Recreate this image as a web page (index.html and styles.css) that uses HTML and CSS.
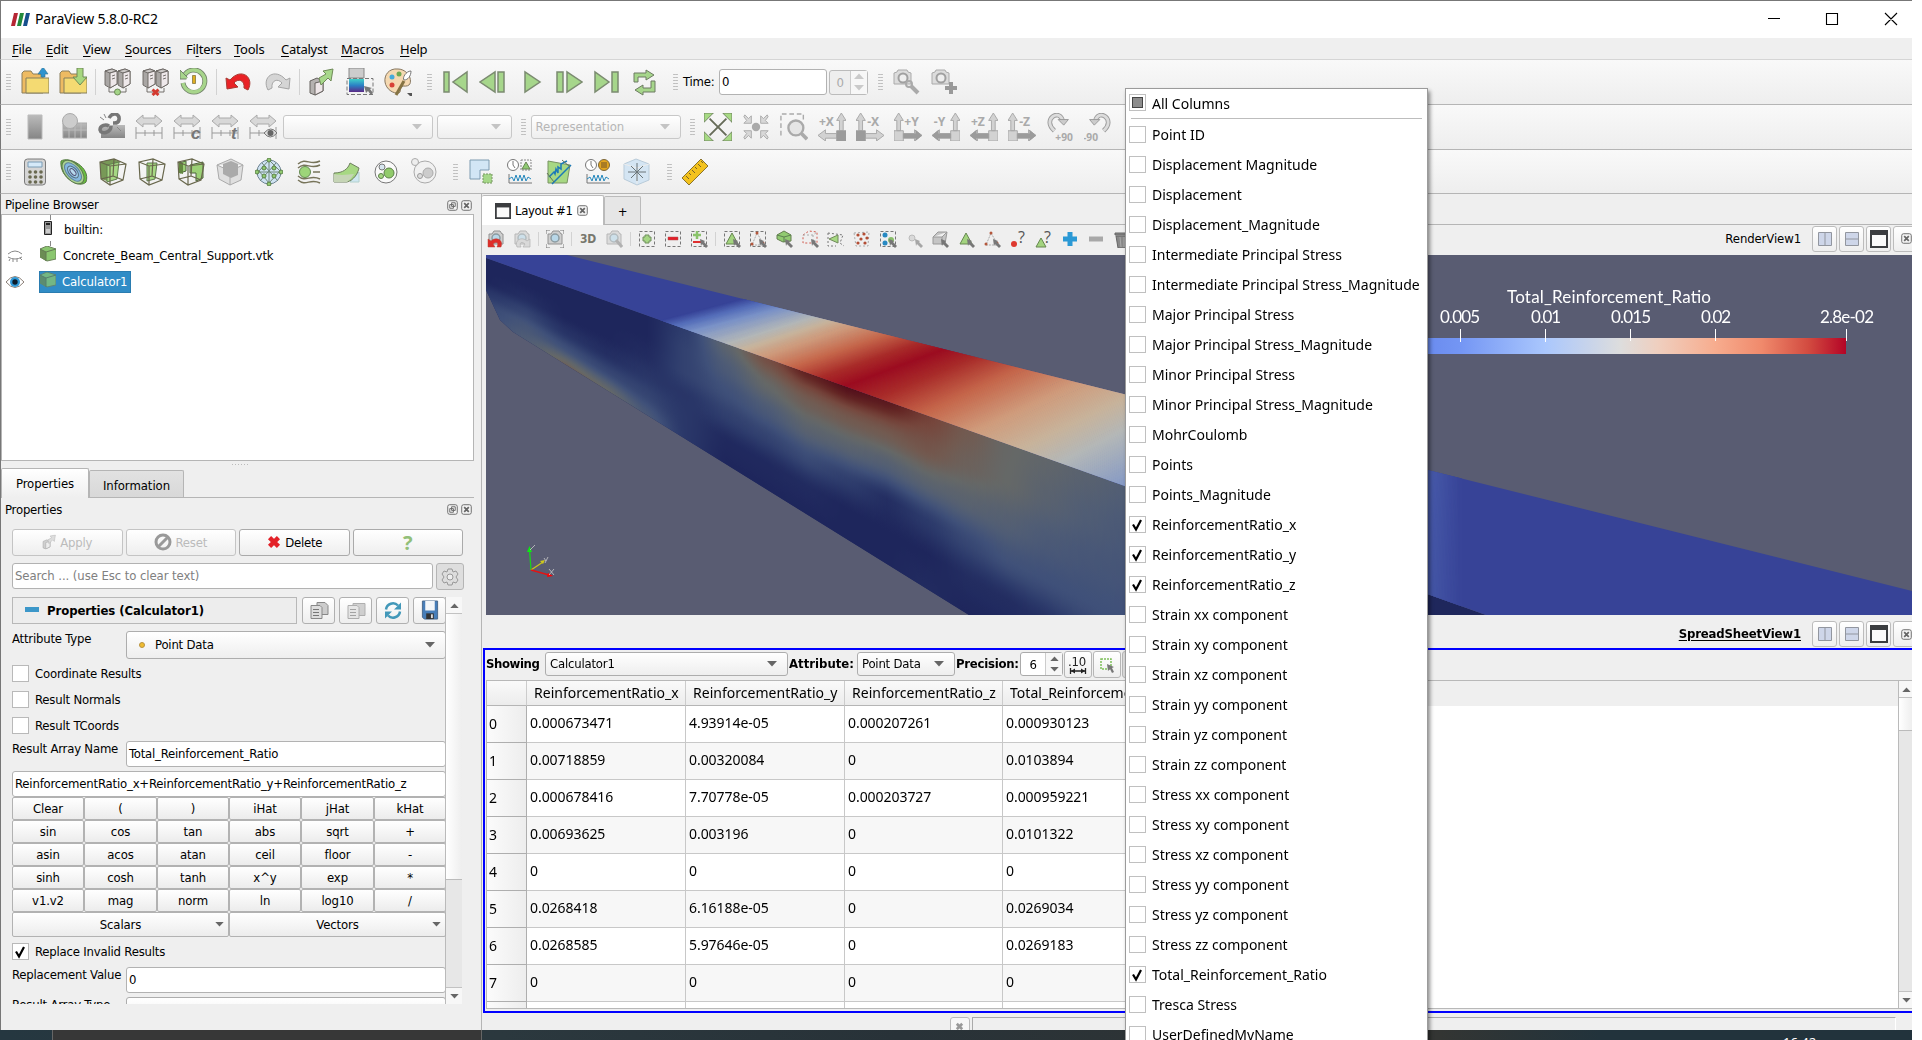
FILE: index.html
```html
<!DOCTYPE html>
<html lang="en">
<head>
<meta charset="utf-8">
<title>ParaView 5.8.0-RC2</title>
<link rel="stylesheet" href="styles.css">
</head>
<body>
<svg class="paints" aria-hidden="true">
  <defs>
    <linearGradient id="steel" x1="0" y1="0" x2="0" y2="1"><stop offset="0" stop-color="#bbb"/><stop offset="1" stop-color="#858585"/></linearGradient>
    <linearGradient id="cool" x1="0" y1="0" x2="0" y2="1"><stop offset="0" stop-color="#3fd0c9"/><stop offset=".5" stop-color="#2b7fc4"/><stop offset="1" stop-color="#5b2a86"/></linearGradient>
  </defs>
</svg>
<svg class="defs" aria-hidden="true">
  <symbol id="folder" viewBox="0 0 28 28"><path d="M1 25V5l2-2h7l2 3h10v19z" fill="#eebb62" stroke="#8a7f5c"/><path d="M5 10h23v15H5z" fill="#f4da72" stroke="#857f5c"/></symbol>
  <symbol id="open" viewBox="0 0 28 28"><use href="#folder"/><path d="M22-1l5 7h-3v3h-4V6h-3z" fill="#2e93cf" stroke="#34748f" stroke-width=".6"/></symbol>
  <symbol id="save" viewBox="0 0 28 28"><use href="#folder"/><path d="M18 0h6v9h4l-7 8-7-8h4z" fill="#a7d77f" stroke="#6f8a58"/></symbol>
  <symbol id="servers" viewBox="0 0 28 28"><g stroke="#66625f" stroke-width=".9"><path d="M1 3l7-2 5 2v13l-7 4-5-3z" fill="#a9a6a4"/><path d="M1 3l7-2 5 2-7 2z" fill="#cbc8c6"/><path d="M6 5l7-2v13l-7 4z" fill="#eee8ea"/><path d="M14 3l7-2 5 2v13l-7 4-5-3z" fill="#a9a6a4"/><path d="M14 3l7-2 5 2-7 2z" fill="#cbc8c6"/><path d="M19 5l7-2v13l-7 4z" fill="#eee8ea"/><path d="M8 8l3-1M8 11l3-1M21 8l3-1M21 11l3-1M5 20v4h17v-4" fill="none"/></g></symbol>
  <symbol id="connect" viewBox="0 0 28 28"><use href="#servers"/><circle cx="13.500" cy="24" r="3" fill="#a3d487" stroke="#6d8a58"/></symbol>
  <symbol id="disconnect" viewBox="0 0 28 28"><use href="#servers"/><path d="M10.500 21.500l6 5.500m0-5.500l-6 5.500" stroke="#d33a30" stroke-width="3"/></symbol>
  <symbol id="reset" viewBox="0 0 28 28"><path d="M4 8a11 11 0 1 1-1 7" fill="none" stroke="#72826a" stroke-width="5"/><path d="M4 8a11 11 0 1 1-1 7" fill="none" stroke="#a7d58b" stroke-width="3.400"/><path d="M0 2v9h9z" fill="#a7d58b" stroke="#72826a"/><circle cx="14" cy="14" r="8" fill="#fafafa"/><path d="M12.500 7.500h3v8h-3z" fill="#dfae20" stroke="#786a35" stroke-width=".7"/></symbol>
  <symbol id="undo" viewBox="0 0 28 28"><path d="M1 10l1 11 11-2-4-4c4-5 11-3 10 5l4 2C30 9 16-1 5 12z" fill="#e92226" stroke="#a83b33"/></symbol>
  <symbol id="redo" viewBox="0 0 28 28"><path d="M27 10l-1 11-11-2 4-4C15 10 8 12 9 20l-4 2C-2 9 12-1 23 12z" fill="#d5d5d5" stroke="#a5a5a5"/></symbol>
  <symbol id="box-out" viewBox="0 0 28 28"><path d="M2 13l7-3 6 3v10l-8 4-5-2z" fill="#b5b2b0" stroke="#66625f"/><path d="M7 15l8-2v10l-8 4z" fill="#eee6e8" stroke="#66625f"/><path d="M11 10L18 6l-3-3 10-2-2 12-3-3-7 7z" fill="#a7d78b" stroke="#6f8a58"/></symbol>
  <symbol id="colormap" viewBox="0 0 28 28"><path d="M3 0h15v10H3z" fill="#ccc" stroke="#888"/><path d="M3 11h15v13H3z" fill="url(#cool)"/><path d="M1 10.500h26v16H1z" fill="none" stroke="#777" stroke-dasharray="4 2"/><path d="M18 18l8 2-2 1 3 4-2 2-3-4-2 2z" fill="#777"/></symbol>
  <symbol id="palette" viewBox="0 0 28 28"><path d="M14 1C5 0 0 7 1 14s8 12 14 11c3-2-1-5 4-7 8 1 8-4 7-8S20 1 14 1z" fill="#f5d9b1" stroke="#85755e"/><circle cx="15" cy="6" r="2.500" fill="#70a952"/><circle cx="8" cy="9" r="2.500" fill="#46aada"/><circle cx="8" cy="17" r="2.500" fill="#d84135"/><path d="M27 3c-5 0-9 7-7 9 4 0 7-4 7-9z" fill="#fff" stroke="#777"/><path d="M20 13l-8 14" stroke="#857343" stroke-width="3"/><path d="M23 25h8l-4 4z" fill="#555"/></symbol>
  <symbol id="t-first" viewBox="0 0 28 28"><path d="M3 4h5v20H3zM26 4v20L12 14z" fill="#a6d68b" stroke="#7b8b70" stroke-width="1.500"/></symbol>
  <symbol id="t-prev" viewBox="0 0 28 28"><path d="M16 4v20L1 14zM19 4h6v20h-6z" fill="#a6d68b" stroke="#7b8b70" stroke-width="1.500"/></symbol>
  <symbol id="t-play" viewBox="0 0 28 28"><path d="M8 4v20l15-10z" fill="#a6d68b" stroke="#7b8b70" stroke-width="1.500"/></symbol>
  <symbol id="t-next" viewBox="0 0 28 28"><path d="M2 4h6v20H2zM12 4v20l15-10z" fill="#a6d68b" stroke="#7b8b70" stroke-width="1.500"/></symbol>
  <symbol id="t-last" viewBox="0 0 28 28"><path d="M2 4v20l14-10zM19 4h6v20h-6z" fill="#a6d68b" stroke="#7b8b70" stroke-width="1.500"/></symbol>
  <symbol id="t-loop" viewBox="0 0 28 28"><g fill="#a6d68b" stroke="#6d7b62"><path d="M3 14V5h12V2l8 5-8 5V9H7v5z"/><path d="M24 13v11H12v3l-8-5 8-5v3h8v-7z"/></g></symbol>
  <symbol id="cam" viewBox="0 0 28 28"><path d="M2 5l3-1 1-2h9l1 2 3 1v11H2z" fill="#dcdcdc" stroke="#aaa"/><circle cx="11" cy="10" r="4.500" fill="#eee" stroke="#a0a0a0" stroke-width="2"/></symbol>
  <symbol id="cam-wrench" viewBox="0 0 28 28"><use href="#cam"/><circle cx="17" cy="16" r="3" fill="none" stroke="#aaa" stroke-width="2"/><path d="M19 18l7 7" stroke="#aaa" stroke-width="4"/></symbol>
  <symbol id="cam-plus" viewBox="0 0 28 28"><use href="#cam"/><path d="M21 14v12M15 20h12" stroke="#999" stroke-width="4"/></symbol>

  <symbol id="bar" viewBox="0 0 28 28"><path d="M7 2h14v24H7z" fill="url(#steel)" stroke="#bbb"/></symbol>
  <symbol id="shape" viewBox="0 0 28 28"><path d="M4 10h24v15H4z" fill="url(#steel)" stroke="#aaa"/><path d="M10 10v15M16 10v15M22 10v15M4 17h24" stroke="#bbb" fill="none"/><circle cx="11" cy="8" r="7.500" fill="#ccc" stroke="#aaa"/></symbol>
  <symbol id="unlink" viewBox="0 0 28 28"><path d="M4 12h24v13H4z" fill="url(#steel)"/><g fill="none" stroke="#777" stroke-width="3.500"><path d="M12 5c4-7 11-4 10 2-1 4-5 3-6 3M14 13c0 7-10 9-11 4 0-5 6-6 9-4"/></g><path d="M3 4l4 3M7 1l2 4M20 14l4 4" stroke="#888"/></symbol>
  <symbol id="range" viewBox="0 0 28 28"><path d="M1 8l7-6v3h12V2l7 6-7 6v-3H8v3z" fill="#d8d8d8" stroke="#aaa"/><path d="M1 14v12M27 14v12M1 20h26M10 17v6M19 17v6" stroke="#999"/></symbol>
  <symbol id="range-c" viewBox="0 0 28 28"><use href="#range"/><text x="18" y="26" class="glyph">c</text></symbol>
  <symbol id="range-t" viewBox="0 0 28 28"><use href="#range"/><text x="20" y="26" class="glyph">t</text></symbol>
  <symbol id="range-eye" viewBox="0 0 28 28"><use href="#range"/><path d="M15 20q7-8 13 0-7 8-13 0z" fill="#ddd" stroke="#777"/><circle cx="21.500" cy="20" r="3" fill="#666"/></symbol>
  <symbol id="fit" viewBox="0 0 30 30"><path d="M6 6l18 18M24 6L6 24" stroke="#666b58" stroke-width="2"/><path d="M0 0h10L0 10zM30 0v10L20 0zM0 30V20l10 10zM30 30H20l10-10z" fill="#a7da84" stroke="#6c805d"/></symbol>
  <symbol id="converge" viewBox="0 0 30 30"><circle cx="15" cy="15" r="4.500" fill="#aaa"/><g fill="#d8d8d8" stroke="#aaa"><path d="M3 2l4 4 3-3v8H2l3-3-3-4zM27 2l-4 4-3-3v8h8l-3-3 3-4zM3 28l4-4 3 3v-8H2l3 3-3 4zM27 28l-4-4-3 3v-8h8l-3 3 3 4z"/></g></symbol>
  <symbol id="zoom-box" viewBox="0 0 30 30"><path d="M1 24V1h24v8" fill="none" stroke="#aaa" stroke-width="1.500" stroke-dasharray="5 3"/><circle cx="17" cy="16" r="8" fill="#e5e5e5" stroke="#aaa" stroke-width="2.500"/><path d="M23 22l6 6" stroke="#aaa" stroke-width="4"/></symbol>
  <symbol id="ax-left" viewBox="0 0 30 30"><g fill="#d2d2d2" stroke="#a8a8a8"><path d="M20 22H8v-4l-8 6 8 6v-3h12zM20 19h10v11H20zM23 19V8h-3l5-8 5 8h-3v11z"/></g></symbol>
  <symbol id="ax-right" viewBox="0 0 30 30"><g fill="#d2d2d2" stroke="#a8a8a8"><path d="M10 22h12v-4l8 6-8 6v-3H10zM0 19h10v11H0zM3 19V8H0l5-8 5 8H7v11z"/></g></symbol>
  <symbol id="px" viewBox="0 0 30 30"><use href="#ax-left"/><path d="M20 19h10v11H20z" fill="#9b9b9b"/><text x="1" y="14" class="ax">+X</text></symbol>
  <symbol id="mx" viewBox="0 0 30 30"><use href="#ax-right"/><path d="M0 19h10v11H0z" fill="#9b9b9b"/><text x="12" y="14" class="ax">-X</text></symbol>
  <symbol id="py" viewBox="0 0 30 30"><use href="#ax-right"/><path d="M10 22h13v-4l7 6-7 6v-3H10z" fill="#9b9b9b"/><text x="11" y="14" class="ax">+Y</text></symbol>
  <symbol id="my" viewBox="0 0 30 30"><use href="#ax-left"/><path d="M20 22H7v-4l-7 6 7 6v-3h13z" fill="#9b9b9b"/><text x="2" y="14" class="ax">-Y</text></symbol>
  <symbol id="pz" viewBox="0 0 30 30"><use href="#ax-left"/><path d="M20 22H7v-4l-7 6 7 6v-3h13z" fill="#9b9b9b"/><text x="1" y="14" class="ax">+Z</text></symbol>
  <symbol id="mz" viewBox="0 0 30 30"><use href="#ax-right"/><path d="M10 22h13v-4l7 6-7 6v-3H10z" fill="#9b9b9b"/><text x="12" y="14" class="ax">-Z</text></symbol>
  <symbol id="rot-p" viewBox="0 0 30 30"><path d="M9 19C-5 7 15-6 18 9" fill="none" stroke="#9c9c9c" stroke-width="5"/><path d="M9 19C-5 7 15-6 18 9" fill="none" stroke="#dcdcdc" stroke-width="3"/><path d="M13 7h11l-5 6z" fill="#ccc" stroke="#999"/><text x="10" y="30" class="ax sm">+90</text></symbol>
  <symbol id="rot-m" viewBox="0 0 30 30"><path d="M21 19C35 7 15-6 12 9" fill="none" stroke="#9c9c9c" stroke-width="5"/><path d="M21 19C35 7 15-6 12 9" fill="none" stroke="#dcdcdc" stroke-width="3"/><path d="M17 7H6l5 6z" fill="#ccc" stroke="#999"/><text x="-1" y="30" class="ax sm">-90</text></symbol>

  <symbol id="calc" viewBox="0 0 28 28"><rect x="3.500" y="1" width="21" height="26" rx="3" fill="#d5d5d5" stroke="#7b7b7b"/><path d="M7 4h14v5H7z" fill="#d5e9f8" stroke="#7b9cb5"/><g fill="#696951"><circle cx="9" cy="14" r="1.800"/><circle cx="14.500" cy="14" r="1.800"/><circle cx="20" cy="14" r="1.800"/><circle cx="9" cy="19" r="1.800"/><circle cx="14.500" cy="19" r="1.800"/><circle cx="20" cy="19" r="1.800"/><circle cx="9" cy="24" r="1.800"/><circle cx="14.500" cy="24" r="1.800"/><circle cx="20" cy="24" r="1.800"/></g></symbol>
  <symbol id="contour" viewBox="0 0 28 28"><path d="M1 3C9-2 31 9 26 24 20 31-1 20 1 3z" fill="#69be3f" stroke="#587846"/><ellipse cx="13" cy="14" rx="14" ry="8" transform="rotate(49 13 14)" fill="#abd291" stroke="#5d7a4e"/><ellipse cx="13" cy="14" rx="11" ry="6" transform="rotate(49 13 14)" fill="#85b9df" stroke="#60839b"/><ellipse cx="13" cy="14" rx="7" ry="4" transform="rotate(49 13 14)" fill="#9ac9e8" stroke="#546e80"/><ellipse cx="13" cy="14" rx="4" ry="2" transform="rotate(49 13 14)" fill="#b7d9ed" stroke="#557"/></symbol>
  <symbol id="cube" viewBox="0 0 28 28"><path d="M1 4L15 1l12 5-3 16-13 5-9-6zM1 4l10 4 16-2M11 8v19M15 1l-1 17-12 3M14 18l10 4" fill="none" stroke="#68674c" stroke-width="1.200"/></symbol>
  <symbol id="clip" viewBox="0 0 28 28"><path d="M1 4l13-3 8 3-11 4-3 15-6-2z" fill="#789957"/><path d="M8 7l12-3-2 17-10 3z" fill="#a6d883" stroke="#60814f"/><use href="#cube"/></symbol>
  <symbol id="slice" viewBox="0 0 28 28"><path d="M9 5h10l-2 16-8 2z" fill="#a6d883" stroke="#5f794f"/><use href="#cube"/></symbol>
  <symbol id="threshold" viewBox="0 0 28 28"><path d="M2 5l7-2v10l-6 2zM13 7l13-3v16l-7 3v-8h-6z" fill="#9bd075" stroke="#4d643c"/><path d="M2 5h4v11l-4-1z" fill="#648740"/><use href="#cube"/></symbol>
  <symbol id="extract" viewBox="0 0 28 28"><path d="M1 7L15 1l12 6-2 15-11 5L3 21zM1 7l13 6 13-6M14 13v14" fill="#dfdfdf" stroke="#aaa"/><path d="M7 6l8-3 7 3v11l-7 3-8-4z" fill="#aaa"/></symbol>
  <symbol id="glyph" viewBox="0 0 28 28"><circle cx="14" cy="14" r="12" fill="#cfe3f2" stroke="#6d8291"/><path d="M3 14h22M7 5l16 18M21 5L5 23M14 2L4 13l10 12 11-12zM14 2v24" fill="none" stroke="#6f887a"/><g fill="#91cb70" stroke="#5b8047"><circle cx="14" cy="2" r="2"/><circle cx="2" cy="14" r="2"/><circle cx="26" cy="14" r="2"/><circle cx="14" cy="26" r="2"/><circle cx="9" cy="10" r="2"/><circle cx="19" cy="10" r="2"/><circle cx="9" cy="18" r="2"/><circle cx="19" cy="18" r="2"/></g></symbol>
  <symbol id="stream" viewBox="0 0 28 28"><path d="M4 6C12-1 16 8 26 3M4 10C12 3 16 12 26 7M4 18c8 7 12-2 22 3M4 22c8 7 12-2 22 3M19 14h7" fill="none" stroke="#77745a" stroke-width="1.400"/><circle cx="11" cy="14" r="5.500" fill="#9dd579" stroke="#658b52"/></symbol>
  <symbol id="warp" viewBox="0 0 28 28"><path d="M17 24h9V14z" fill="#cfe7f1" stroke="#b2d0cc"/><path d="M1 24v-9c9 0 14-4 16-10l9 5c-1 5-5 12-12 14z" fill="#a7d883" stroke="#6f805f"/><path d="M1 24v-8c9 2 14 0 20 0-2 3-4 6-7 8z" fill="#c6d5b6"/></symbol>
  <symbol id="group" viewBox="0 0 28 28"><circle cx="14" cy="14" r="11" fill="#fafafa" stroke="#777"/><circle cx="10" cy="9" r="3" fill="#d7e6f0" stroke="#777"/><circle cx="17" cy="15" r="5" fill="#91cb6b" stroke="#5b8047"/><circle cx="9" cy="18" r="2.500" fill="#a6d883" stroke="#5b8047"/></symbol>
  <symbol id="level" viewBox="0 0 28 28"><circle cx="14" cy="14" r="11" fill="#f1f1f1" stroke="#aaa"/><circle cx="4" cy="4" r="3.500" fill="#eee" stroke="#aaa"/><circle cx="17" cy="15" r="5" fill="#ccc" stroke="#aaa"/><circle cx="9" cy="18" r="2.500" fill="#ddd" stroke="#999"/></symbol>
  <symbol id="sel-ext" viewBox="0 0 28 28"><path d="M3 2h19v10h-9v9H3z" fill="#d2e6f5" stroke="#7c9bb0"/><path d="M16 16h9v9h-9z" fill="#a5d788" stroke="#769463" stroke-dasharray="2 1"/></symbol>
  <symbol id="clock" viewBox="0 0 28 28"><circle cx="7" cy="7" r="5.500" fill="#fff" stroke="#777"/><path d="M7 3v4l2 3M3 16v9h23" fill="none" stroke="#777"/><path d="M3 21l3-2 2 4 2-6 2 6 2-6 2 6 2-6 2 6 2-4 3 2" fill="none" stroke="#2588bd"/></symbol>
  <symbol id="plot-sel" viewBox="0 0 28 28"><use href="#clock"/><path d="M15 2h10v10H15z" fill="none" stroke="#888" stroke-dasharray="2 1"/><path d="M20 4l4 7h-8z" fill="#8fcb72" stroke="#688553"/></symbol>
  <symbol id="plot-line" viewBox="0 0 28 28"><path d="M3 3l22 4-3 18H3z" fill="#a7d883" stroke="#789362"/><path d="M4 19l5-5 1 2 1-5 2 4 0-6 3 2 0-5 6-3M7 26L26 7" fill="none" stroke="#1c79b8" stroke-width="1.500"/><path d="M2 15l7 9M17 2l8 7" stroke="#627559"/></symbol>
  <symbol id="plot-time" viewBox="0 0 28 28"><use href="#clock"/><circle cx="20" cy="7" r="5.500" fill="#e3a620" stroke="#7d673a"/><path d="M17 4h6v6h-6z" fill="#a87b25"/></symbol>
  <symbol id="snow" viewBox="0 0 28 28"><path d="M1 6l12-5 13 5v16l-12 5-13-6z" fill="#d4e5f3" stroke="#b9cbd9"/><path d="M1 6l13 4 12-4M14 10v16" fill="none" stroke="#ececec"/><path d="M14 5v18M5 14h18M8 8l12 12M20 8L8 20" stroke="#6a7578"/></symbol>
  <symbol id="ruler" viewBox="0 0 28 28"><path d="M1 20L20 1l7 7L8 27z" fill="#f3c21d" stroke="#8b742e"/><path d="M5 18l3 3M8 15l2 2M11 12l3 3M14 9l2 2M17 6l3 3M20 3l2 2" stroke="#796326"/></symbol>

  <symbol id="s-cam" viewBox="0 0 18 18"><path d="M2 4h3l2-3h6l2 3h1v10H2z" fill="#cfcfcf" stroke="#929292"/><circle cx="9" cy="8" r="4" fill="#b8d7e8" stroke="#8c9ba1" stroke-width="1.500"/></symbol>
  <symbol id="s-camundo" viewBox="0 0 18 18"><use href="#s-cam"/><path d="M1 9v8h7l-2-3c4-3 6-1 4 3h4c3-7-5-11-10-6z" fill="#df2d29" stroke="#b04438" stroke-width=".5"/></symbol>
  <symbol id="s-camredo" viewBox="0 0 18 18"><g opacity=".6"><use href="#s-cam"/><path d="M17 9v8h-7l2-3c-4-3-6-1-4 3H4c-3-7 5-11 10-6z" fill="#ccc" stroke="#888" stroke-width=".7"/></g></symbol>
  <symbol id="s-shot" viewBox="0 0 18 18"><use href="#s-cam"/><path d="M0 4V0h4M14 0h4v4M18 14v4h-4M4 18H0v-4" fill="none" stroke="#777"/></symbol>
  <symbol id="s-camzoom" viewBox="0 0 18 18"><g opacity=".6"><use href="#s-cam"/><path d="M11 10l6 7" stroke="#888" stroke-width="3"/></g></symbol>
  <symbol id="s-dash" viewBox="0 0 18 18"><path d="M1.500 1.500h15v15h-15z" fill="none" stroke="#777" stroke-dasharray="3 2"/></symbol>
  <symbol id="s-cur" viewBox="0 0 18 18"><path d="M10 9l5 2-1 1 4 4-2 2-4-4-1 2z" fill="#777"/></symbol>
  <symbol id="s-plus" viewBox="0 0 18 18"><use href="#s-dash"/><path d="M7 5h4v2h2v4h-2v2H7v-2H5V7h2z" fill="#a5d684" stroke="#71905f"/></symbol>
  <symbol id="s-minus" viewBox="0 0 18 18"><use href="#s-dash"/><path d="M4 7h10v3H4z" fill="#e51e28" stroke="#a55" stroke-width=".5"/></symbol>
  <symbol id="s-pm" viewBox="0 0 18 18"><use href="#s-dash"/><path d="M7 1v8M3 5h8" stroke="#8ac36b" stroke-width="2.500"/><path d="M3 12h9" stroke="#df3030" stroke-width="2"/><use href="#s-cur"/></symbol>
  <symbol id="s-tri" viewBox="0 0 18 18"><path d="M9 3l6 11H3z" fill="#a3d47f" stroke="#668750"/><use href="#s-cur"/></symbol>
  <symbol id="s-seltri" viewBox="0 0 18 18"><use href="#s-dash"/><use href="#s-tri"/></symbol>
  <symbol id="s-pts" viewBox="0 0 18 18"><path d="M8 3l7 12H3z" fill="none" stroke="#aaa" stroke-dasharray="2 1"/><circle cx="8" cy="3" r="1.500" fill="#b4573c"/><circle cx="3" cy="14" r="1.500" fill="#b4573c"/><circle cx="14" cy="13" r="1.500" fill="#b4573c"/><use href="#s-cur"/></symbol>
  <symbol id="s-selpts" viewBox="0 0 18 18"><use href="#s-dash"/><use href="#s-pts"/></symbol>
  <symbol id="s-frus" viewBox="0 0 18 18"><path d="M2 5l7-4 7 4v6l-8 1-6-3z" fill="#91ca71" stroke="#657f50"/><path d="M2 5l7 2 7-2M9 7v5" fill="none" stroke="#5d8050"/><use href="#s-cur"/></symbol>
  <symbol id="s-frusp" viewBox="0 0 18 18"><path d="M2 5l6-4 8 1v11H2z" fill="none" stroke="#d15c50" stroke-dasharray="2 2"/><path d="M2 5h10l4-3M12 5v8" fill="none" stroke="#aaa" stroke-dasharray="2"/><use href="#s-cur"/></symbol>
  <symbol id="s-poly" viewBox="0 0 18 18"><path d="M1 3l15 2-3 8 4 3M1 3v13h8" fill="none" stroke="#777" stroke-dasharray="2 2"/><path d="M2 9l9-4v8z" fill="#a6d882" stroke="#718b5b"/></symbol>
  <symbol id="s-polyp" viewBox="0 0 18 18"><path d="M1 3l15-1-1 14H3z" fill="none" stroke="#aaa" stroke-dasharray="2 2"/><g fill="#b34e35"><circle cx="5" cy="5" r="1.600"/><circle cx="11" cy="4" r="1.600"/><circle cx="8" cy="9" r="1.600"/><circle cx="14" cy="8" r="1.600"/><circle cx="5" cy="13" r="1.600"/><circle cx="12" cy="13" r="1.600"/></g></symbol>
  <symbol id="s-block" viewBox="0 0 18 18"><use href="#s-dash"/><circle cx="6" cy="5" r="2.500" fill="#2789c2"/><circle cx="6" cy="13" r="2.500" fill="#2789c2"/><circle cx="12" cy="10" r="3" fill="#88be68"/><use href="#s-cur"/></symbol>
  <symbol id="s-gpt" viewBox="0 0 18 18"><g opacity=".6"><circle cx="7" cy="8" r="3" fill="#ccc" stroke="#999"/><use href="#s-cur"/></g></symbol>
  <symbol id="s-gcube" viewBox="0 0 18 18"><path d="M2 7l5-5h9l-2 12H2zM2 7h9l5-5M11 7v8" fill="#c5c5c5" stroke="#999"/><use href="#s-cur"/></symbol>
  <symbol id="s-hpt" viewBox="0 0 18 18"><circle cx="5" cy="14" r="3" fill="#de392f"/><text x="9" y="13" class="q">?</text></symbol>
  <symbol id="s-htri" viewBox="0 0 18 18"><path d="M6 8l5 9H1z" fill="#a3d47f" stroke="#668750"/><text x="9" y="13" class="q">?</text></symbol>
  <symbol id="s-add" viewBox="0 0 18 18"><path d="M9 2v14M2 9h14" stroke="#2b99d5" stroke-width="5"/></symbol>
  <symbol id="s-sub" viewBox="0 0 18 18"><path d="M2 6.500h14v5H2z" fill="#a8a8a8"/></symbol>
  <symbol id="s-trash" viewBox="0 0 18 18"><path d="M2 3h16v2H2zM3 6h14l-2 12H5z" fill="#888" stroke="#666"/><path d="M7 7l1 10M11 7v10" stroke="#aaa"/></symbol>
  <symbol id="x-box" viewBox="0 0 12 12"><rect x=".8" y=".8" width="10.400" height="10.400" rx="2" fill="#f4f4f4" stroke="#666"/><path d="M3.500 3.500l5 5m0-5l-5 5" stroke="#666" stroke-width="1.900"/></symbol>
  <symbol id="float" viewBox="0 0 12 12"><rect x=".8" y=".8" width="10.400" height="10.400" rx="2" fill="#f4f4f4" stroke="#666"/><path d="M5 3h4v4H5zM3 5h4v4H3z" fill="#f4f4f4" stroke="#666"/></symbol>
  <symbol id="check" viewBox="0 0 16 16"><path d="M4 7.500l3 5L12 3" fill="none" stroke="#000" stroke-width="2.200"/></symbol>
  <symbol id="win" viewBox="0 0 18 18"><path d="M1 1h16v16H1z" fill="#fafafa" stroke="#3b3d40" stroke-width="2"/><path d="M0 0h18v5H0z" fill="#3b3d40"/></symbol>
  <symbol id="split-v" viewBox="0 0 14 14"><path d="M.5.500h13v13H.500zM7 0v14" fill="#ced6e9" stroke="#92969f"/></symbol>
  <symbol id="split-h" viewBox="0 0 14 14"><path d="M.5.500h13v13H.500zM0 7h14" fill="#ced6e9" stroke="#92969f"/></symbol>
  <symbol id="dn" viewBox="0 0 10 6"><path d="M0 0h10L5 5.500z" fill="#666"/></symbol>
  <symbol id="up" viewBox="0 0 10 6"><path d="M0 6h10L5 .5z" fill="#666"/></symbol>
  <symbol id="s-cube" viewBox="0 0 16 16"><path d="M0 3l7-3 9 3v10l-9 2-7-4z" fill="#8ac66f" stroke="#6d835c"/><path d="M0 3l6 3v9l-6-4z" fill="#6b8c54"/><path d="M0 3l6 3 10-3M6 6v9" fill="none" stroke="#627a52"/></symbol>
</svg>

<div class="app">
  <header class="titlebar">
    <svg class="logo" viewBox="0 0 20 15"><path d="M4 1h4L5 14H1z" fill="#b62634"/><path d="M10 1h4l-3 13H7z" fill="#238a3c"/><path d="M16 1h4l-3 13h-4z" fill="#17508d"/></svg>
    <span class="app-name">ParaView 5.8.0-RC2</span>
    <svg class="win-ctl" viewBox="0 0 130 14"><path d="M0 6.500h12M58.500 1.500h11v11h-11zM117 1l12 12M129 1l-12 12" fill="none" stroke="#000" stroke-width="1.100"/></svg>
  </header>
  <nav class="menubar">
    <span><u>F</u>ile</span><span><u>E</u>dit</span><span><u>V</u>iew</span><span><u>S</u>ources</span><span>Fi<u>l</u>ters</span><span><u>T</u>ools</span><span><u>C</u>atalyst</span><span><u>M</u>acros</span><span><u>H</u>elp</span>
  </nav>

  <div class="toolbar row1">
    <i class="grip"></i>
    <svg><use href="#open"/></svg><svg><use href="#save"/></svg><i class="sep"></i>
    <svg><use href="#connect"/></svg><svg><use href="#disconnect"/></svg><svg><use href="#reset"/></svg><i class="sep"></i>
    <svg><use href="#undo"/></svg><svg><use href="#redo"/></svg><i class="sep"></i>
    <svg><use href="#box-out"/></svg><svg><use href="#colormap"/></svg><svg><use href="#palette"/></svg>
    <i class="grip g2"></i>
    <svg><use href="#t-first"/></svg><svg><use href="#t-prev"/></svg><svg><use href="#t-play"/></svg><svg><use href="#t-next"/></svg><svg><use href="#t-last"/></svg><svg><use href="#t-loop"/></svg>
    <i class="grip g3"></i>
    <span class="time-label">Time:</span><span class="field time">0</span>
    <span class="spin off"><b>0</b><span class="arrows"><svg><use href="#up"/></svg><svg><use href="#dn"/></svg></span></span>
    <i class="grip g4"></i>
    <svg><use href="#cam-wrench"/></svg><svg><use href="#cam-plus"/></svg>
  </div>
  <div class="toolbar row2">
    <i class="grip"></i>
    <svg><use href="#bar"/></svg><svg><use href="#shape"/></svg><svg><use href="#unlink"/></svg><svg><use href="#range"/></svg><svg><use href="#range-c"/></svg><svg><use href="#range-t"/></svg><svg><use href="#range-eye"/></svg>
    <span class="combo off c150"><svg><use href="#dn"/></svg></span>
    <span class="combo off c75"><svg><use href="#dn"/></svg></span>
    <i class="grip g5"></i>
    <span class="combo off c150 rep">Representation<svg><use href="#dn"/></svg></span>
    <i class="grip g5"></i>
    <svg><use href="#fit"/></svg><svg><use href="#converge"/></svg><svg><use href="#zoom-box"/></svg><svg><use href="#px"/></svg><svg><use href="#mx"/></svg><svg><use href="#py"/></svg><svg><use href="#my"/></svg><svg><use href="#pz"/></svg><svg><use href="#mz"/></svg><svg><use href="#rot-p"/></svg><svg><use href="#rot-m"/></svg>
  </div>
  <div class="toolbar row3">
    <i class="grip"></i>
    <svg><use href="#calc"/></svg><svg><use href="#contour"/></svg><svg><use href="#clip"/></svg><svg><use href="#slice"/></svg><svg><use href="#threshold"/></svg><svg><use href="#extract"/></svg><svg><use href="#glyph"/></svg><svg><use href="#stream"/></svg><svg><use href="#warp"/></svg><svg><use href="#group"/></svg><svg><use href="#level"/></svg>
    <i class="grip g6"></i>
    <svg><use href="#sel-ext"/></svg><svg><use href="#plot-sel"/></svg><svg><use href="#plot-line"/></svg><svg><use href="#plot-time"/></svg><svg><use href="#snow"/></svg>
    <i class="grip g7"></i>
    <svg><use href="#ruler"/></svg>
  </div>

  <main class="workspace">
    <aside class="side">
      <div class="dock-title"><span>Pipeline Browser</span><svg><use href="#float"/></svg><svg><use href="#x-box"/></svg></div>
      <div class="tree">
        <div class="node"><span class="eye"></span><svg class="srv" viewBox="0 0 8 14"><path d="M6.500-6v5M6.500 20v5" stroke="#888"/><path d="M.5.500h7v13h-7z" fill="#999" stroke="#222"/><path d="M2 2h4v2H2z" fill="#222"/><path d="M2 8h4v4H2z" fill="#ccc"/></svg><span class="name">builtin:</span></div>
        <div class="node"><span class="eye"><svg viewBox="0 0 18 12"><path d="M2 4q7-6 14 0M2 7q7 4 14 0M4 9l-1 2M7 9v3M11 9v3M14 8l2 2" fill="none" stroke="#888"/></svg></span><svg class="cube"><use href="#s-cube"/></svg><span class="name w">Concrete_Beam_Central_Support.vtk</span></div>
        <div class="node"><span class="eye"><svg viewBox="0 0 18 12"><path d="M0 6q9-11 18 0-9 11-18 0z" fill="#fff" stroke="#8b8078"/><circle cx="9" cy="6" r="5" fill="#3098d6"/><circle cx="9" cy="6" r="2.700" fill="#0b1c2b"/></svg></span><span class="picked"><svg class="cube"><use href="#s-cube"/></svg><span class="name">Calculator1</span></span></div>
      </div>
      <div class="splitter"></div>
      <div class="tabs"><span class="tab on">Properties</span><span class="tab">Information</span></div>
      <div class="dock-title second"><span>Properties</span><svg><use href="#float"/></svg><svg><use href="#x-box"/></svg></div>
      <div class="actions">
        <span class="btn off"><svg viewBox="0 0 28 28" class="gray"><use href="#box-out"/></svg>Apply</span>
        <span class="btn off"><svg viewBox="0 0 18 18"><circle cx="9" cy="9" r="7" fill="none" stroke="#999" stroke-width="3"/><path d="M4 14L14 4" stroke="#999" stroke-width="3"/></svg>Reset</span>
        <span class="btn"><svg viewBox="0 0 18 18" class="del"><path d="M4 4l10 10M14 4L4 14" stroke="#e32128" stroke-width="5"/></svg>Delete</span>
        <span class="btn help">?</span>
      </div>
      <div class="search"><span class="field">Search ... (use Esc to clear text)</span><span class="gear"><svg viewBox="0 0 18 18"><path d="M7 1h4l1 3 3-1 2 3-2 3 2 3-2 3-3-1-1 3H7l-1-3-3 1-2-3 2-3-2-3 2-3 3 1z" fill="#ddd" stroke="#999"/><circle cx="9" cy="9" r="3" fill="#eee" stroke="#999"/></svg></span></div>
      <div class="scroll-area">
        <div class="form">
          <div class="section"><span class="section-title"><i></i>Properties (Calculator1)</span>
            <span class="tool"><svg viewBox="0 0 18 18"><path d="M7 1h8l3 3v9H7z" fill="#ccc" stroke="#888"/><path d="M1 4h9l2 2v11H1z" fill="#ddd" stroke="#888"/><path d="M3 8h6M3 11h6M3 14h6" stroke="#777"/></svg></span>
            <span class="tool fade"><svg viewBox="0 0 18 18"><path d="M6 2h12v12H6z" fill="#bbb" stroke="#888"/><path d="M1 4h9l2 2v11H1z" fill="#ddd" stroke="#888"/><path d="M3 8h6M3 11h6M3 14h6" stroke="#777"/></svg></span>
            <span class="tool"><svg viewBox="0 0 18 18"><path d="M2 8a7 7 0 0 1 12-4M16 10a7 7 0 0 1-12 4" fill="none" stroke="#4298b9" stroke-width="2.500"/><path d="M17 1v7h-7zM1 17v-7h7z" fill="#4298b9"/></svg></span>
            <span class="tool"><svg viewBox="0 0 18 20"><path d="M1 0h16v19H3l-2-2z" fill="#477eb9" stroke="#48678b"/><path d="M4 0h10v10H4z" fill="#f4f7fa"/><path d="M5 13h8v6H5z" fill="#333"/><path d="M10 14h2v4h-2z" fill="#ddd"/></svg></span>
          </div>
          <div class="prop combo-row"><label>Attribute Type</label><span class="combo big"><i class="dot"></i>Point Data<svg><use href="#dn"/></svg></span></div>
          <div class="chk"><span class="box"></span>Coordinate Results</div>
          <div class="chk"><span class="box"></span>Result Normals</div>
          <div class="chk"><span class="box"></span>Result TCoords</div>
          <div class="prop name-row"><label>Result Array Name</label><span class="field">Total_Reinforcement_Ratio</span></div>
          <div class="field expr">ReinforcementRatio_x+ReinforcementRatio_y+ReinforcementRatio_z</div>
          <div class="keys">
            <span>Clear</span><span>(</span><span>)</span><span>iHat</span><span>jHat</span><span>kHat</span>
            <span>sin</span><span>cos</span><span>tan</span><span>abs</span><span>sqrt</span><span>+</span>
            <span>asin</span><span>acos</span><span>atan</span><span>ceil</span><span>floor</span><span>-</span>
            <span>sinh</span><span>cosh</span><span>tanh</span><span>x^y</span><span>exp</span><span>*</span>
            <span>v1.v2</span><span>mag</span><span>norm</span><span>ln</span><span>log10</span><span>/</span>
            <span class="wide">Scalars<svg><use href="#dn"/></svg></span><span class="wide">Vectors<svg><use href="#dn"/></svg></span>
          </div>
          <div class="chk last"><span class="box"><svg><use href="#check"/></svg></span>Replace Invalid Results</div>
          <div class="prop value-row"><label>Replacement Value</label><span class="field">0</span></div>
          <div class="prop type-row"><label>Result Array Type</label><span class="combo big"></span></div>
        </div>
        <div class="vbar"><span class="cap"><svg><use href="#up"/></svg></span><span class="thumb"></span><span class="groove"></span><span class="cap"><svg><use href="#dn"/></svg></span></div>
      </div>
    </aside>

    <section class="views">
      <div class="view-tabs"><span class="vtab on"><svg class="w18"><use href="#win"/></svg>Layout #1<svg class="w12"><use href="#x-box"/></svg></span><span class="vtab add">+</span></div>
      <div class="view-bar">
        <svg><use href="#s-camundo"/></svg><svg><use href="#s-camredo"/></svg><i class="sep"></i><svg><use href="#s-shot"/></svg><i class="sep"></i><span class="d3">3D</span><svg><use href="#s-camzoom"/></svg><i class="sep"></i>
        <svg><use href="#s-plus"/></svg><svg><use href="#s-minus"/></svg><svg><use href="#s-pm"/></svg><i class="sep"></i>
        <svg><use href="#s-seltri"/></svg><svg><use href="#s-selpts"/></svg><svg><use href="#s-frus"/></svg><svg><use href="#s-frusp"/></svg><svg><use href="#s-poly"/></svg><svg><use href="#s-polyp"/></svg><svg><use href="#s-block"/></svg><svg><use href="#s-gpt"/></svg><svg><use href="#s-gcube"/></svg><svg><use href="#s-tri"/></svg><svg><use href="#s-pts"/></svg><svg><use href="#s-hpt"/></svg><svg><use href="#s-htri"/></svg><svg><use href="#s-add"/></svg><svg><use href="#s-sub"/></svg><svg><use href="#s-trash"/></svg>
        <span class="view-name">RenderView1</span>
        <span class="view-btns"><span><svg><use href="#split-v"/></svg></span><span><svg><use href="#split-h"/></svg></span><span><svg class="w18"><use href="#win"/></svg></span><span><svg class="w12"><use href="#x-box"/></svg></span></span>
      </div>

      <div class="render">
        <canvas id="beam" width="1426" height="360"></canvas>
        <svg class="scene" viewBox="0 0 1426 360">
          <defs>
            <linearGradient id="legendGrad"><stop offset="0" stop-color="#5a7be6"/><stop offset=".18" stop-color="#7496f4"/><stop offset=".36" stop-color="#aac7fd"/><stop offset=".52" stop-color="#dddddd"/><stop offset=".6" stop-color="#efcfbf"/><stop offset=".72" stop-color="#f7ad8f"/><stop offset=".82" stop-color="#f08a6c"/><stop offset=".92" stop-color="#d24b40"/><stop offset="1" stop-color="#b40426"/></linearGradient>
          </defs>
          <g fill="none" stroke-width="1.300"><path d="M45 315L43.500 294" stroke="#19d21c"/><path d="M45 315l12-8" stroke="#c9c419"/><path d="M45 315l18 5" stroke="#e21414"/></g>
          <path d="M43.500 291l2.500 6h-5z" fill="#0ee814"/><path d="M59 305l-2 4-3-3z" fill="#cfc91d"/><path d="M67 321l-6 1 1-4z" fill="#f00"/>
          <path d="M63 314l5 6M68 314l-5 6M58 303l2 3M62 302l-3 6M44 295l5-5" fill="none" stroke="#ccc" stroke-width=".8"/>
          <rect x="890" y="83" width="470" height="16" fill="url(#legendGrad)"/>
          <path d="M974.500 74v13M1059.500 74v13M1144.500 74v12M1229.500 74v12M1360.500 74v12" stroke="#fff"/>
          <g class="legend"><text x="1123" y="48" textLength="204">Total_Reinforcement_Ratio</text><text x="974" y="68" textLength="40">0.005</text><text x="1060" y="68" textLength="30">0.01</text><text x="1145" y="68" textLength="40">0.015</text><text x="1230" y="68" textLength="30">0.02</text><text x="1361" y="68" textLength="54">2.8e-02</text></g>
        </svg>
      </div>

      <div class="sheet-title"><span class="view-name active">SpreadSheetView1</span><span class="view-btns"><span><svg><use href="#split-v"/></svg></span><span><svg><use href="#split-h"/></svg></span><span><svg class="w18"><use href="#win"/></svg></span><span><svg class="w12"><use href="#x-box"/></svg></span></span></div>
      <div class="sheet">
        <div class="sheet-bar"><b class="showing">Showing</b><span class="combo s1">Calculator1<svg><use href="#dn"/></svg></span><b class="attr">Attribute:</b><span class="combo s2">Point Data<svg><use href="#dn"/></svg></span><b class="prec">Precision:</b>
          <span class="spin prec-spin"><b>6</b><span class="arrows"><svg><use href="#up"/></svg><svg><use href="#dn"/></svg></span></span>
          <span class="sbtn"><svg viewBox="0 0 20 22"><text x="0" y="12" class="ten">.10</text><path d="M2 17h16M2.500 14v6M17.500 14v6" stroke="#222" stroke-width="1.300"/><path d="M3 17l4-2.500v5zM17 17l-4-2.500v5z" fill="#222"/></svg></span>
          <span class="sbtn"><svg viewBox="0 0 20 22"><path d="M4 5h10v10H4z" fill="none" stroke="#7ec05a" stroke-dasharray="2 1" stroke-width="1.500"/><path d="M10 10l7 3-2 1 2 4-2 1-2-4-2 2z" fill="#777"/></svg></span><span class="sbtn dark"></span>
        </div>
        <div class="table-wrap">
          <div class="grid">
            <span class="h n"></span><span class="h">ReinforcementRatio_x</span><span class="h">ReinforcementRatio_y</span><span class="h">ReinforcementRatio_z</span><span class="h">Total_Reinforcement_Ratio</span><span class="hfill"></span>
            <span class="n">0</span><span>0.000673471</span><span>4.93914e-05</span><span>0.000207261</span><span>0.000930123</span><em></em>
            <span class="n">1</span><span class="alt">0.00718859</span><span class="alt">0.00320084</span><span class="alt">0</span><span class="alt">0.0103894</span><em></em>
            <span class="n">2</span><span>0.000678416</span><span>7.70778e-05</span><span>0.000203727</span><span>0.000959221</span><em></em>
            <span class="n">3</span><span class="alt">0.00693625</span><span class="alt">0.003196</span><span class="alt">0</span><span class="alt">0.0101322</span><em></em>
            <span class="n">4</span><span>0</span><span>0</span><span>0</span><span>0</span><em></em>
            <span class="n">5</span><span class="alt">0.0268418</span><span class="alt">6.16188e-05</span><span class="alt">0</span><span class="alt">0.0269034</span><em></em>
            <span class="n">6</span><span>0.0268585</span><span>5.97646e-05</span><span>0</span><span>0.0269183</span><em></em>
            <span class="n">7</span><span class="alt">0</span><span class="alt">0</span><span class="alt">0</span><span class="alt">0</span><em></em>
            <span class="n"></span><span></span><span></span><span></span><span></span><em></em>
          </div>
          <div class="vbar"><span class="cap"><svg><use href="#up"/></svg></span><span class="thumb"></span><span class="groove"></span><span class="cap"><svg><use href="#dn"/></svg></span></div>
        </div>
      </div>
      <div class="status"><span class="cancel"><svg viewBox="0 0 10 10"><path d="M2 2l6 6M8 2L2 8" stroke="#999" stroke-width="3"/></svg></span><span class="progress"></span></div>
    </section>
  </main>
  <footer class="taskbar"><span class="task"></span><span class="clock">16:42</span></footer>

  <div class="popup">
    <div class="item all"><span class="box"><i></i></span>All Columns</div>
    <div class="line"></div>
    <div class="item"><span class="box"></span>Point ID</div>
    <div class="item"><span class="box"></span>Displacement Magnitude</div>
    <div class="item"><span class="box"></span>Displacement</div>
    <div class="item"><span class="box"></span>Displacement_Magnitude</div>
    <div class="item"><span class="box"></span>Intermediate Principal Stress</div>
    <div class="item"><span class="box"></span>Intermediate Principal Stress_Magnitude</div>
    <div class="item"><span class="box"></span>Major Principal Stress</div>
    <div class="item"><span class="box"></span>Major Principal Stress_Magnitude</div>
    <div class="item"><span class="box"></span>Minor Principal Stress</div>
    <div class="item"><span class="box"></span>Minor Principal Stress_Magnitude</div>
    <div class="item"><span class="box"></span>MohrCoulomb</div>
    <div class="item"><span class="box"></span>Points</div>
    <div class="item"><span class="box"></span>Points_Magnitude</div>
    <div class="item"><span class="box"><svg><use href="#check"/></svg></span>ReinforcementRatio_x</div>
    <div class="item"><span class="box"><svg><use href="#check"/></svg></span>ReinforcementRatio_y</div>
    <div class="item"><span class="box"><svg><use href="#check"/></svg></span>ReinforcementRatio_z</div>
    <div class="item"><span class="box"></span>Strain xx component</div>
    <div class="item"><span class="box"></span>Strain xy component</div>
    <div class="item"><span class="box"></span>Strain xz component</div>
    <div class="item"><span class="box"></span>Strain yy component</div>
    <div class="item"><span class="box"></span>Strain yz component</div>
    <div class="item"><span class="box"></span>Strain zz component</div>
    <div class="item"><span class="box"></span>Stress xx component</div>
    <div class="item"><span class="box"></span>Stress xy component</div>
    <div class="item"><span class="box"></span>Stress xz component</div>
    <div class="item"><span class="box"></span>Stress yy component</div>
    <div class="item"><span class="box"></span>Stress yz component</div>
    <div class="item"><span class="box"></span>Stress zz component</div>
    <div class="item"><span class="box"><svg><use href="#check"/></svg></span>Total_Reinforcement_Ratio</div>
    <div class="item"><span class="box"></span>Tresca Stress</div>
    <div class="item"><span class="box"></span>UserDefinedMyName</div>
  </div>
</div>
<script src="beam.js"></script>
</body>
</html>
```
FILE: beam.js
```js
// Draws the beam: a lit top face and a shaded front face, both coloured by the scalar field.
(function () {
  var canvas = document.getElementById('beam');
  var ctx = canvas.getContext('2d');

  var topMap = [[0, 55, 67, 151], [0.12, 86, 111, 186], [0.25, 123, 147, 200], [0.45, 180, 184, 184], [0.55, 200, 180, 156],
    [0.66, 208, 156, 124], [0.8, 198, 103, 75], [0.92, 170, 45, 42], [1, 157, 13, 33]];
  var frontMap = [[0, 30, 38, 92], [0.12, 44, 58, 107], [0.25, 63, 80, 121], [0.36, 80, 93, 117], [0.5, 101, 104, 103],
    [0.62, 114, 90, 80], [0.75, 118, 70, 60], [0.87, 100, 38, 36], [1, 82, 14, 26]];

  function colour(map, s) {
    s = Math.max(0, Math.min(1, s));
    var i = 1;
    while (i < map.length - 1 && map[i][0] < s) i++;
    var a = map[i - 1], b = map[i], t = (s - a[0]) / (b[0] - a[0]);
    return 'rgb(' + [1, 2, 3].map(function (k) { return Math.round(a[k] + (b[k] - a[k]) * t); }).join(',') + ')';
  }
  function polygon(pts) {
    ctx.beginPath();
    pts.forEach(function (p, i) { i ? ctx.lineTo(p[0], p[1]) : ctx.moveTo(p[0], p[1]); });
    ctx.closePath();
  }
  function ridge(x) { return 3 + 0.357 * x; }
  function crest(x) { return (x - 81) * 0.2498; }
  function sole(x) { return 77 + (x - 27) * 0.6206; }

  ctx.fillStyle = '#595c72';
  ctx.fillRect(0, 0, 1426, 360);

  // Front face: one row of scalars (ridge to sole) for every 40 px.
  var rows = [
    [0, 0, 0, 0.1, 0.2, 0.22], [0, 0, 0.05, 0.18, 0.3, 0.36], [0, 0, 0, 0.08, 0.25, 0.56], [0, 0, 0, 0.05, 0.2, 0.5],
    [0, 0, 0.03, 0.09, 0.18, 0.32], [0.14, 0.17, 0.17, 0.09, 0.1, 0.1], [0.45, 0.34, 0.25, 0.15, 0.02, 0],
    [0.7, 0.5, 0.33, 0.17, 0.02, 0], [0.9, 0.6, 0.43, 0.22, 0.03, 0], [1, 0.63, 0.42, 0.15, 0, 0],
    [0.95, 0.62, 0.38, 0.05, 0, 0], [0.78, 0.65, 0.42, 0.12, 0, 0.03], [0.62, 0.56, 0.42, 0.2, 0.04, 0],
    [0.51, 0.5, 0.39, 0.26, 0.04, 0], [0.47, 0.42, 0.33, 0.25, 0.06, 0], [0.42, 0.36, 0.3, 0.25, 0.12, 0],
    [0.37, 0.32, 0.29, 0.25, 0.18, 0.1], [0.3, 0.3, 0.3, 0.25, 0.2, 0.1]
  ];
  ctx.save();
  polygon([[0, 3], [1000, 360], [483, 360], [27, 77], [14, 65], [0, 35]]);
  ctx.clip();
  ctx.fillStyle = '#1f275c';
  ctx.fillRect(0, 0, 1010, 360);
  function smooth(t) { return t * t * (3 - 2 * t) * 0.5 + t * 0.5; }
  for (var x = 0; x < 672; x++) {
    var c = Math.floor(x / 40), f = smooth(x / 40 - c);
    var y0 = ridge(x), y1 = sole(x);
    var g = ctx.createLinearGradient(0, y0, 0, y1);
    for (var k = 0; k <= 30; k++) {
      var v = k / 30 * 5, r = Math.min(4, Math.floor(v)), q = smooth(v - r);
      var left = rows[c][r] + (rows[c][r + 1] - rows[c][r]) * q;
      var right = rows[c + 1][r] + (rows[c + 1][r + 1] - rows[c + 1][r]) * q;
      g.addColorStop(k / 30, colour(frontMap, left + (right - left) * f));
    }
    ctx.fillStyle = g;
    ctx.fillRect(x, y0 - 2, 1, y1 - y0 + 6);
  }
  ctx.restore();

  // Top face: iso-lines as [value, x on the ridge, x on the crest].
  var iso = [[0, 174, 256], [0.25, 205, 294], [0.45, 240, 328], [0.64, 272, 360], [0.8, 306, 400], [0.92, 334, 432], [1, 359, 458],
    [0.92, 392, 490], [0.8, 436, 534], [0.66, 486, 592], [0.55, 535, 645], [0.42, 585, 700], [0.28, 640, 770], [0.12, 900, 915], [0, 975, 975]];
  ctx.save();
  polygon([[0, 0], [81, 0], [1426, 336], [1426, 360], [1000, 360], [0, 3]]);
  ctx.clip();
  ctx.fillStyle = colour(topMap, 0);
  ctx.fillRect(0, 0, 1426, 360);
  function at(lo, hi, e) {
    var ax = lo, ay = ridge(lo), bx = hi, by = crest(hi);
    return [ax + (bx - ax) * e, ay + (by - ay) * e];
  }
  for (var i = 1; i < iso.length; i++) {
    var a = iso[i - 1], b = iso[i], n = 48;
    for (var j = 0; j < n; j++) {
      var t0 = j / n, t1 = (j + 1) / n;
      var l0 = a[1] + (b[1] - a[1]) * t0, h0 = a[2] + (b[2] - a[2]) * t0;
      var l1 = a[1] + (b[1] - a[1]) * t1 + 1, h1 = a[2] + (b[2] - a[2]) * t1 + 1;
      ctx.fillStyle = colour(topMap, a[0] + (b[0] - a[0]) * t0);
      polygon([at(l0, h0, -0.05), at(l0, h0, 1.05), at(l1, h1, 1.05), at(l1, h1, -0.05)]);
      ctx.fill();
    }
  }
  ctx.restore();
})();
```
FILE: styles.css
```css
* { box-sizing: border-box; }
html, body { margin: 0; background: #fff; overflow: hidden; }
body { font: 13px/16px "DejaVu Sans Condensed", "DejaVu Sans", sans-serif; letter-spacing: -0.2px; color: #000; }
svg { overflow: visible; display: block; flex: none; }
.paints { width: 0; height: 0; position: absolute; }
.defs { display: none; }
i, em { font-style: normal; }

.app { position: relative; width: 1912px; height: 1040px; overflow: hidden; background: #efefef; display: flex; flex-direction: column; white-space: nowrap; }
.titlebar, .menubar, .popup, .grid { font-family: "Noto Sans", "Open Sans", sans-serif; letter-spacing: 0; }
.titlebar { flex: none; height: 38px; border-top: 1px solid #777; border-left: 1px solid #777; background: #fff; display: flex; align-items: center; padding-left: 9px; padding-bottom: 1px; font-size: 14px; letter-spacing: -0.15px; }
.logo { width: 20px; height: 15px; margin-right: 5px; }
.win-ctl { width: 130px; height: 14px; margin-left: auto; margin-right: 14px; }
.menubar { flex: none; height: 22px; border-left: 1px solid #777; border-bottom: 1px solid #d5d5d5; display: grid; grid-template-columns: 34px 37px 42px 61px 48px 47px 60px 59px 40px; padding-left: 11px; align-items: center; font-size: 13px; letter-spacing: -0.25px; line-height: 20px; }
.menubar u { text-underline-offset: 2px; }

.toolbar { flex: none; height: 45px; display: flex; align-items: center; background: linear-gradient(#f9f9f9, #eee); border-bottom: 1px solid #b5b5b5; border-left: 1px solid #777; }
.toolbar > svg { width: 28px; height: 28px; margin: 0 5px; }
.row3 { height: 44px; }
.row3 > svg { margin: 0 5.5px; }
.grip { flex: none; width: 5px; height: 18px; margin: 0 5px 0 5px; background: radial-gradient(circle, #bbb 0.8px, transparent 1px) 0 0 / 2.500px 3px; }
.row3 > .grip:first-child { margin-right: 4px; }
.sep { flex: none; width: 1px; height: 26px; background: #d2d2d2; margin: 0 3px; }
.toolbar .g2 { margin: 0 4px 0 10px; }
.toolbar .g3 { margin: 0 4px 0 9px; }
.time-label { width: 37px; padding-left: 1px; }
.field { display: block; background: #fff; border: 1px solid #b2b2b2; border-radius: 3px; padding-left: 2px; height: 26px; line-height: 23px; overflow: hidden; letter-spacing: -.2px; }
.time { width: 108px; margin-right: 2px; }
.spin { display: flex; width: 39px; height: 25px; border: 1px solid #bbb; border-radius: 3px; background: #fff; }
.spin b { flex: 1; font-weight: normal; line-height: 24px; text-align: center; }
.spin.off { color: #aaa; background: #eee; }
.arrows { width: 17px; border-left: 1px solid #ccc; display: flex; flex-direction: column; align-items: center; justify-content: space-around; background: #f7f7f7; }
.arrows svg { width: 10px; height: 6px; }
.off .arrows svg { opacity: .3; }
.toolbar .g4 { margin: 0 4px 0 10px; }
.combo { display: flex; align-items: center; justify-content: space-between; border: 1px solid #adadad; border-radius: 3px; background: linear-gradient(#fff, #eee); height: 24px; padding: 0 10px 0 4px; }
.combo svg { width: 10px; height: 6px; margin-left: auto; }
.combo.off { border-color: #c8c8c8; color: #b6b6b6; flex: none; }
.combo.off svg { opacity: .35; }
.c150 { width: 150px; margin-left: 1px; }
.c75 { width: 75px; margin-left: 4px; }
.c150.rep { margin-left: 0; margin-right: 0; letter-spacing: 0; }
.row2 .grip.g5 { margin: 0 4.500px 0 9px; }
.toolbar .g6 { margin: 0 3px 0 9px; }
.row3 .g6 ~ svg { margin: 0 5.600px; }
.toolbar .g7 { margin: 0 3px 0 10px; }
.glyph { font: italic bold 17px "Liberation Sans", sans-serif; fill: #777; }
.ax { font: bold 13px "Noto Sans", sans-serif; fill: #aaa; letter-spacing: 0; }
.ax.sm { font-size: 11px; }
.q { font: 16px "Open Sans", sans-serif; fill: #555; }

.workspace { flex: none; height: 836px; display: flex; }
.side { width: 481px; flex: none; border-left: 1px solid #777; display: flex; flex-direction: column; }
.dock-title { height: 20px; flex: none; display: flex; align-items: center; padding: 2px 9px 0 4px; width: 480px; gap: 3px; }
.dock-title span { flex: 1; }
.dock-title svg { width: 11px; height: 11px; }
.tree { flex: none; width: 473px; height: 247px; background: #fff; border: 1px solid #b5b5b5; padding-top: 2px; }
.node { height: 26px; display: flex; align-items: center; }
.eye { width: 37px; padding-left: 4px; }
.eye svg { width: 18px; height: 12px; }
.srv { width: 8px; height: 14px; margin: 0 12px 4px 5px; }
.node .cube { width: 16px; height: 16px; margin: 0 7px 4px 1px; }
.node .cube + .name { letter-spacing: -0.13px; }
.picked { height: 22px; display: flex; align-items: center; background: #308cc6; border: 1px solid #2a7cb0; color: #fff; padding-right: 3px; }
.node .picked .cube { opacity: .75; margin-left: 0; margin-right: 6px; }
.splitter { flex: none; width: 18px; height: 7px; margin-left: 230px; background: radial-gradient(circle, #bbb 0.8px, transparent 1px) 0 0 / 3px 7px; }
.tabs { flex: none; height: 30px; width: 473px; border-bottom: 1px solid #b5b5b5; display: flex; align-items: flex-end; }
.tab { width: 95px; height: 27px; border: 1px solid #b5b5b5; border-bottom: 0; border-radius: 2px 2px 0 0; background: linear-gradient(#e2e2e2, #d8d8d8); line-height: 29px; text-align: center; letter-spacing: -.05px; }
.tab.on { width: 88px; height: 30px; background: linear-gradient(#fff, #efefef); margin-bottom: -1px; letter-spacing: -.1px; }
.dock-title.second { height: 23px; padding-top: 0; }
.actions { display: grid; grid-template-columns: repeat(4, 1fr); width: 462px; gap: 3px; padding-left: 11px; margin-top: 8px; flex: none; }
.btn { height: 27px; border: 1px solid #aaa; border-radius: 3px; background: linear-gradient(#fff, #eee); display: flex; align-items: center; justify-content: center; gap: 3px; padding-top: 1px; }
.btn svg { width: 18px; height: 18px; margin-top: -3px; }
.btn.off { color: #bbb; border-color: #c4c4c4; }
.btn svg.gray { filter: grayscale(1); opacity: .55; width: 15px; height: 16px; }
.btn svg.del { width: 16px; }
.btn.help { font: bold 20px/24px "Noto Sans", sans-serif; color: #92bf78; padding-top: 0; }
.search { display: flex; gap: 3px; padding-left: 11px; margin-top: 7px; flex: none; }
.search .field { width: 421px; color: #808080; letter-spacing: -0.08px; line-height: 24px; }
.gear { width: 28px; height: 27px; border: 1px solid #b5b5b5; border-radius: 3px; background: #dedede; padding: 4px; }
.gear svg { width: 18px; height: 18px; }
.scroll-area { display: flex; flex: none; height: 407px; margin-top: 7px; padding-left: 11px; overflow: hidden; }
.form { width: 434px; flex: none; }
.section { display: flex; height: 27px; gap: 4px; margin-bottom: 7px; }
.section-title { width: 286px; margin-right: 1px; background: #ededed; border: 1px solid #b8b8b8; line-height: 26px; font-weight: bold; display: flex; align-items: center; letter-spacing: -0.08px; }
.section-title i { width: 14px; height: 5px; background: #3c97c9; margin: 0 8px 2px 12px; }
.tool { width: 33px; border: 1px solid #b0b0b0; border-radius: 3px; background: linear-gradient(#fff, #eee); display: flex; align-items: center; justify-content: center; }
.tool svg { width: 18px; height: 19px; }
.tool.fade svg { opacity: .65; }
.prop { display: flex; }
.prop label { width: 114px; flex: none; }
.prop .field, .prop .combo { flex: 1; }
.combo.big { height: 28px; padding: 0 10px 0 12px; }
.dot { width: 6px; height: 6px; border-radius: 3px; background: #f0bc30; border: 1px solid #b99340; margin-right: 10px; }
.combo-row { height: 34px; }
.chk { height: 26px; display: flex; align-items: flex-start; gap: 6px; line-height: 18px; }
.box { flex: none; width: 17px; height: 17px; border: 1px solid #b9b9b9; background: #fff; }
.box svg { width: 16px; height: 16px; margin-left: -1px; }
.name-row { height: 30px; margin-top: -2px; }
.expr { height: 26px; letter-spacing: -.19px; }
.keys { display: grid; grid-template-columns: 72px 73px 72px 72px 73px 72px; grid-auto-rows: 23px; }
.keys span { border: 1px solid #b2b2b2; border-radius: 2px; background: linear-gradient(#fff, #ececec); line-height: 21px; text-align: center; letter-spacing: -.12px; }
.keys .wide { grid-column: span 3; height: 25px; line-height: 23px; position: relative; }
.keys .wide svg { position: absolute; width: 9px; height: 5px; right: 4px; top: 9px; }
.chk.last { margin-top: 8px; height: 24px; line-height: 17px; }
.value-row { height: 30px; }
.vbar { width: 17px; border-left: 1px solid #bababa; display: flex; flex-direction: column; background: #e7e7e7; flex: none; }
.form + .vbar { margin-left: -1px; }
.cap { height: 17px; background: #f7f7f7; border-bottom: 1px solid #c2c2c2; display: flex; align-items: center; justify-content: center; flex: none; }
.cap:last-child { border-bottom: 0; border-top: 1px solid #c2c2c2; }
.cap svg { width: 9px; height: 5px; }
.thumb { height: 266px; background: linear-gradient(90deg, #fff, #eee); border-bottom: 1px solid #bbb; flex: none; }
.groove { flex: 1; }

.views { flex: 1; min-width: 0; border-left: 1px solid #b5b5b5; display: flex; flex-direction: column; }
.view-tabs { flex: none; height: 31px; display: flex; align-items: flex-end; border-bottom: 1px solid #b5b5b5; }
.vtab { height: 28px; width: 37px; border: 1px solid #bbb; border-bottom: 0; background: #e6e6e6; border-radius: 2px 2px 0 0; line-height: 29px; text-align: center; }
.vtab.on { width: 122px; height: 30px; background: #fff; margin-bottom: -1px; display: flex; align-items: center; padding-left: 13px; letter-spacing: -0.35px; border-left: 0; }
.w18 { width: 16px; height: 16px; }
.vtab .w18 { margin-right: 4px; }
.vtab .w12 { width: 11px; height: 11px; margin: -1px 0 0 4px; }
.view-bar { flex: none; height: 30px; display: flex; align-items: center; padding: 0 0 3px 1px; }
.view-bar > svg { width: 18px; height: 18px; margin: 0 4px; }
.view-bar > .sep { height: 14px; }
.d3 { width: 26px; text-align: center; font: bold 12px "DejaVu Sans Condensed", sans-serif; color: #77776d; }
.view-name { margin-left: auto; margin-right: 11px; letter-spacing: -0.1px; }
.view-btns { display: flex; gap: 2px; width: 100px; overflow: hidden; height: 26px; }
.view-btns > span { flex: none; width: 25px; border: 1px solid #bcbcbc; border-radius: 3px; background: linear-gradient(#fff, #eee); display: flex; align-items: center; justify-content: center; }
.view-btns svg { width: 14px; height: 14px; }
.view-btns .w18 { width: 18px; height: 18px; }
.view-btns .w12 { width: 11px; height: 11px; margin-left: 1px; }
.render { flex: none; display: grid; margin-left: 4px; width: 1426px; height: 360px; }
.render > * { grid-area: 1 / 1; display: block; width: 1426px; height: 360px; }
.scene { overflow: hidden; }
.legend { font: 17px Lato, sans-serif; fill: #fff; text-anchor: middle; letter-spacing: 0; }
.sheet-title { flex: none; height: 33px; display: flex; align-items: center; padding-top: 5px; }
.view-name.active { font-weight: bold; text-decoration: underline; text-underline-offset: 2px; letter-spacing: -0.15px; }

.sheet { flex: none; height: 365px; margin-left: 1px; border: 2px solid #00f; border-right: 0; display: flex; flex-direction: column; }
.sheet-bar { flex: none; height: 30px; display: flex; align-items: center; padding: 0 0 2px 1px; }
.sheet-bar > b { letter-spacing: -.42px; }
.showing { width: 59px; }
.s1 { width: 243px; }
.sheet-bar > .attr { width: 69px; padding-left: 1px; letter-spacing: 0; }
.s2 { width: 98px; }
.sheet-bar > .prec { width: 65px; padding-left: 1px; letter-spacing: -.25px; }
.prec-spin { width: 43px; height: 24px; border-color: #aaa; }
.prec-spin .arrows svg { width: 9px; height: 5px; }
.sbtn { flex: none; width: 28px; height: 27px; border: 1px solid #b6b6b6; border-radius: 3px; background: linear-gradient(#fff, #eee); margin-left: 1px; padding: 2px 3px; }
.sbtn svg { width: 20px; height: 22px; }
.sbtn.dark { background: #ddd; }
.ten { font: 13px "DejaVu Sans Condensed", sans-serif; fill: #222; }
.table-wrap { flex: none; height: 329px; margin-left: 1px; border: 1px solid #b8b8b8; border-right: 0; display: flex; }
.grid { flex: 1; overflow: hidden; background: #fff; display: grid; grid-template-columns: 40px 159px 159px 158px 192px 1fr; grid-template-rows: 25px repeat(9, 37px); font-size: 14px; letter-spacing: -.05px; }
.grid > span { border-right: 1px solid #c8c8c8; border-bottom: 1px solid #c8c8c8; padding-left: 3px; line-height: 34px; }
.grid > .alt { background: #f7f7f7; }
.grid > .n { background: linear-gradient(90deg, #fbfbfb, #ededed); border-color: #aeaeae; line-height: 35px; padding-left: 2px; }
.grid > .h { background: linear-gradient(#fafafa, #ececec); border-right-color: #ccc; border-bottom-color: #b5b5b5; line-height: 24px; padding-left: 7px; letter-spacing: 0.02px; }
.grid > .hfill { background: #efefef; border: 0; }
.table-wrap .vbar { width: 14px; overflow: hidden; }
.table-wrap .cap { padding-left: 2px; }
.table-wrap .thumb { height: 33px; }
.status { display: flex; margin-top: 4px; padding-left: 468px; height: 13px; overflow: hidden; }
.cancel { width: 20px; height: 18px; border: 1px solid #bbb; border-radius: 3px; background: #f7f7f7; padding: 4px; }
.cancel svg { width: 9px; height: 9px; }
.progress { width: 924px; margin-left: 2px; border: 1px solid #aaa; border-right-color: #fff; border-bottom: 0; }
.taskbar { flex: none; height: 10px; background: linear-gradient(90deg, #253740 0, #2b383e 500px, #283238 900px, #333533 1440px, #22333c 1600px, #22333c); display: flex; overflow: hidden; }
.task { width: 430px; margin-left: 52px; background: #373737; border: 1px solid #666; border-bottom: 0; border-top: 0; }
.clock { color: #fff; font: 13px/16px "Noto Sans", sans-serif; margin-left: 1301px; padding-top: 4px; letter-spacing: 0; }

.popup { position: absolute; left: 1125px; top: 88px; width: 303px; height: 970px; background: #fff; border: 1px solid #9b9b9b; box-shadow: 2px 3px 4px rgba(0, 0, 0, .45); padding: 1px 3px 0; font-size: 14px; line-height: 30px; letter-spacing: 0; }
.item { display: flex; height: 30px; gap: 6px; }
.popup .box { margin-top: 6px; width: 17px; height: 17px; border-color: #c0c0c0; }
.popup .box i { display: block; width: 11px; height: 11px; margin: 2px; background: #8c8c8c; border: 1px solid #444; }
.item.all { height: 28px; line-height: 28px; }
.item.all .box { margin-top: 4px; }
.line { height: 1px; margin: 0 2px 1px; background: #bdbdbd; }
```
